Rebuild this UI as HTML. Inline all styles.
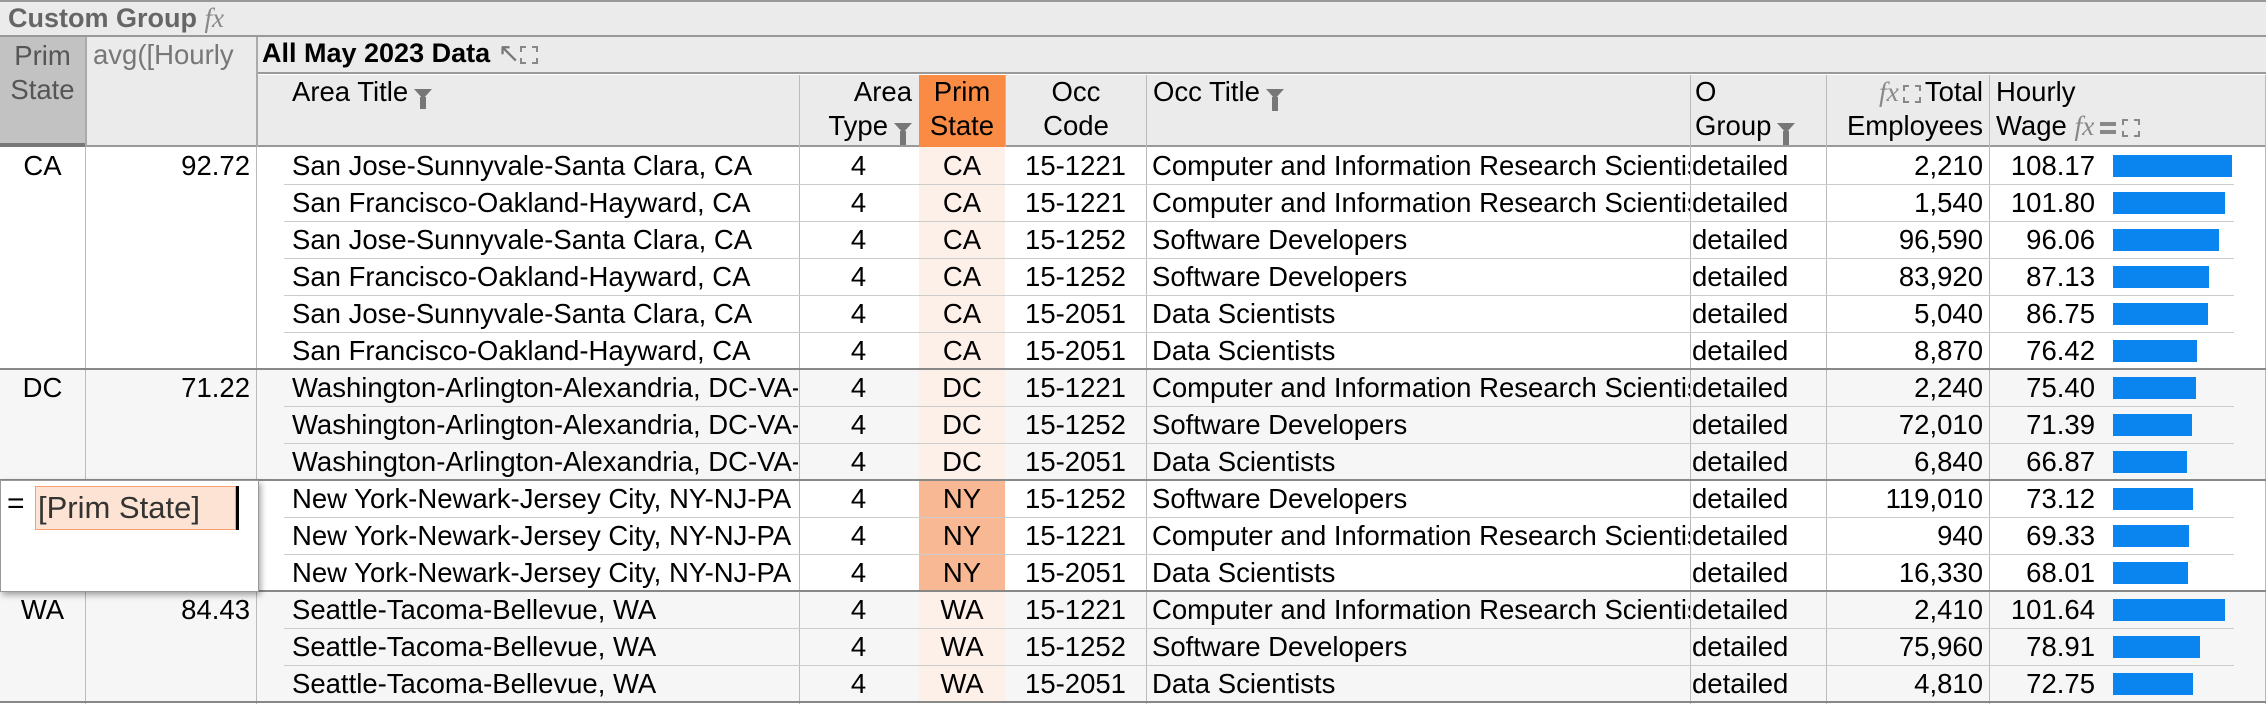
<!DOCTYPE html>
<html><head><meta charset="utf-8"><style>
*{margin:0;padding:0;box-sizing:border-box}
body{width:2266px;height:704px;overflow:hidden;background:#fff;font-family:"Liberation Sans",sans-serif;font-size:27.5px;color:#000;position:relative}
.a{position:absolute;white-space:nowrap;overflow:hidden}
.hdr{background:#ebebeb}
.c{text-align:center}.r{text-align:right}
.fun{display:inline-block;width:0;height:0;border-left:9px solid transparent;border-right:9px solid transparent;border-top:10px solid #777;position:relative;vertical-align:middle;margin-left:6px}
.fun:after{content:"";position:absolute;left:-3px;top:-2px;width:6px;height:14px;background:#777}
.dash{display:inline-block;width:18px;height:18px;border:2px dashed #888;vertical-align:middle}
.fx{font-family:"Liberation Serif",serif;font-style:italic;color:#888}
.bar{position:absolute;height:22px;background:#0a85f0}
.row{position:absolute;left:0;width:2266px;height:37px;line-height:37px}
.row div{position:absolute;top:0;height:37px;white-space:nowrap;overflow:hidden}
.ln{position:absolute;left:284px;width:1950px;height:1px;background:#ccc}
.g{position:absolute;left:0;width:2266px;height:2px;background:#888}
.v{position:absolute;top:147px;height:557px;width:1px;background:#bbb}
</style></head><body>
<div class="a hdr" style="left:0;top:0;width:2266px;height:37px;border-bottom:2px solid #999;border-top:2px solid #999;padding:1px 0 0 8px;color:#666;font-weight:bold;font-size:27px">Custom Group <span class="fx" style="font-weight:normal">fx</span></div>
<div class="a hdr" style="left:0;top:37px;width:2266px;height:37px;border-bottom:2px solid #999"></div>
<div class="a" style="left:0;top:37px;width:85px;height:110px;background:#c2c2c2;border-bottom:4px solid #777;color:#555;text-align:center;padding-top:2px;white-space:normal;line-height:34px">Prim<br>State</div>
<div class="a hdr" style="left:85px;top:37px;width:171px;height:110px;border-left:2px solid #aaa;border-bottom:2px solid #999;color:#777;padding:2px 0 0 6px">avg([Hourly</div>
<div class="a" style="left:262px;top:38px;font-weight:bold;font-size:27px">All May 2023 Data <span style="color:#777;font-weight:normal">&#8598;</span><span class="dash"></span></div>
<div class="a" style="left:256px;top:37px;width:2px;height:110px;background:#aaa"></div>
<div class="a hdr" style="left:258px;top:75px;width:2008px;height:72px;border-bottom:2px solid #999"></div>
<div class="a" style="left:292px;top:75px;line-height:34px">Area Title<span class="fun"></span></div>
<div class="a r" style="left:799px;top:75px;width:119px;line-height:34px;padding-right:6px;border-left:1px solid #bbb;height:72px">Area<br>Type<span class="fun"></span></div>
<div class="a c" style="left:919px;top:75px;width:86px;height:72px;background:#f98b45;line-height:34px">Prim<br>State</div>
<div class="a c" style="left:1005px;top:75px;width:141px;line-height:34px;height:72px;border-left:1px solid #bbb">Occ<br>Code</div>
<div class="a" style="left:1146px;top:75px;width:544px;height:72px;line-height:34px;padding-left:6px;border-left:1px solid #bbb">Occ Title<span class="fun"></span></div>
<div class="a" style="left:1690px;top:75px;width:136px;height:72px;line-height:34px;padding-left:4px;border-left:1px solid #bbb">O<br>Group<span class="fun"></span></div>
<div class="a r" style="left:1826px;top:75px;width:163px;height:72px;line-height:34px;padding-right:6px;border-left:1px solid #bbb"><span class="fx">fx</span><span class="dash" style="margin:0 4px"></span>Total<br>Employees</div>
<div class="a" style="left:1989px;top:75px;width:277px;height:72px;line-height:34px;padding-left:6px;border-left:1px solid #bbb;border-right:1px solid #bbb">Hourly<br>Wage <span class="fx">fx</span><span style="display:inline-block;width:16px;height:12px;border-top:4px solid #888;border-bottom:4px solid #888;vertical-align:middle;margin:0 6px"></span><span class="dash"></span></div>

<div class="a" style="left:0;top:369px;width:2266px;height:111px;background:#f6f6f6"></div>
<div class="a" style="left:0;top:591px;width:2266px;height:111px;background:#f6f6f6"></div>

<div class="v" style="left:85px"></div><div class="v" style="left:256px"></div><div class="v" style="left:799px"></div><div class="v" style="left:1146px"></div><div class="v" style="left:1690px"></div><div class="v" style="left:1826px"></div><div class="v" style="left:1989px"></div><div class="v" style="left:2265px"></div>
<div class="a" style="left:919px;top:147px;width:86px;height:555px;background:#fdf0e9"></div>
<div class="a" style="left:919px;top:480px;width:86px;height:111px;background:#f9b894"></div>

<div class="row" style="top:147px"><div style="left:0;width:85px;text-align:center">CA</div><div style="left:85px;width:165px;text-align:right">92.72</div><div style="left:292px;width:506px">San Jose-Sunnyvale-Santa Clara, CA</div><div style="left:799px;width:119px;text-align:center">4</div><div style="left:919px;width:86px;text-align:center">CA</div><div style="left:1005px;width:141px;text-align:center">15-1221</div><div style="left:1152px;width:538px">Computer and Information Research Scientists</div><div style="left:1692px">detailed</div><div style="left:1826px;width:157px;text-align:right">2,210</div><div style="left:1995px;width:100px;text-align:right">108.17</div></div>
<div class="row" style="top:184px"><div style="left:292px;width:506px">San Francisco-Oakland-Hayward, CA</div><div style="left:799px;width:119px;text-align:center">4</div><div style="left:919px;width:86px;text-align:center">CA</div><div style="left:1005px;width:141px;text-align:center">15-1221</div><div style="left:1152px;width:538px">Computer and Information Research Scientists</div><div style="left:1692px">detailed</div><div style="left:1826px;width:157px;text-align:right">1,540</div><div style="left:1995px;width:100px;text-align:right">101.80</div></div>
<div class="row" style="top:221px"><div style="left:292px;width:506px">San Jose-Sunnyvale-Santa Clara, CA</div><div style="left:799px;width:119px;text-align:center">4</div><div style="left:919px;width:86px;text-align:center">CA</div><div style="left:1005px;width:141px;text-align:center">15-1252</div><div style="left:1152px;width:538px">Software Developers</div><div style="left:1692px">detailed</div><div style="left:1826px;width:157px;text-align:right">96,590</div><div style="left:1995px;width:100px;text-align:right">96.06</div></div>
<div class="row" style="top:258px"><div style="left:292px;width:506px">San Francisco-Oakland-Hayward, CA</div><div style="left:799px;width:119px;text-align:center">4</div><div style="left:919px;width:86px;text-align:center">CA</div><div style="left:1005px;width:141px;text-align:center">15-1252</div><div style="left:1152px;width:538px">Software Developers</div><div style="left:1692px">detailed</div><div style="left:1826px;width:157px;text-align:right">83,920</div><div style="left:1995px;width:100px;text-align:right">87.13</div></div>
<div class="row" style="top:295px"><div style="left:292px;width:506px">San Jose-Sunnyvale-Santa Clara, CA</div><div style="left:799px;width:119px;text-align:center">4</div><div style="left:919px;width:86px;text-align:center">CA</div><div style="left:1005px;width:141px;text-align:center">15-2051</div><div style="left:1152px;width:538px">Data Scientists</div><div style="left:1692px">detailed</div><div style="left:1826px;width:157px;text-align:right">5,040</div><div style="left:1995px;width:100px;text-align:right">86.75</div></div>
<div class="row" style="top:332px"><div style="left:292px;width:506px">San Francisco-Oakland-Hayward, CA</div><div style="left:799px;width:119px;text-align:center">4</div><div style="left:919px;width:86px;text-align:center">CA</div><div style="left:1005px;width:141px;text-align:center">15-2051</div><div style="left:1152px;width:538px">Data Scientists</div><div style="left:1692px">detailed</div><div style="left:1826px;width:157px;text-align:right">8,870</div><div style="left:1995px;width:100px;text-align:right">76.42</div></div>
<div class="row" style="top:369px"><div style="left:0;width:85px;text-align:center">DC</div><div style="left:85px;width:165px;text-align:right">71.22</div><div style="left:292px;width:506px">Washington-Arlington-Alexandria, DC-VA-MD-WV</div><div style="left:799px;width:119px;text-align:center">4</div><div style="left:919px;width:86px;text-align:center">DC</div><div style="left:1005px;width:141px;text-align:center">15-1221</div><div style="left:1152px;width:538px">Computer and Information Research Scientists</div><div style="left:1692px">detailed</div><div style="left:1826px;width:157px;text-align:right">2,240</div><div style="left:1995px;width:100px;text-align:right">75.40</div></div>
<div class="row" style="top:406px"><div style="left:292px;width:506px">Washington-Arlington-Alexandria, DC-VA-MD-WV</div><div style="left:799px;width:119px;text-align:center">4</div><div style="left:919px;width:86px;text-align:center">DC</div><div style="left:1005px;width:141px;text-align:center">15-1252</div><div style="left:1152px;width:538px">Software Developers</div><div style="left:1692px">detailed</div><div style="left:1826px;width:157px;text-align:right">72,010</div><div style="left:1995px;width:100px;text-align:right">71.39</div></div>
<div class="row" style="top:443px"><div style="left:292px;width:506px">Washington-Arlington-Alexandria, DC-VA-MD-WV</div><div style="left:799px;width:119px;text-align:center">4</div><div style="left:919px;width:86px;text-align:center">DC</div><div style="left:1005px;width:141px;text-align:center">15-2051</div><div style="left:1152px;width:538px">Data Scientists</div><div style="left:1692px">detailed</div><div style="left:1826px;width:157px;text-align:right">6,840</div><div style="left:1995px;width:100px;text-align:right">66.87</div></div>
<div class="row" style="top:480px"><div style="left:292px;width:506px">New York-Newark-Jersey City, NY-NJ-PA</div><div style="left:799px;width:119px;text-align:center">4</div><div style="left:919px;width:86px;text-align:center">NY</div><div style="left:1005px;width:141px;text-align:center">15-1252</div><div style="left:1152px;width:538px">Software Developers</div><div style="left:1692px">detailed</div><div style="left:1826px;width:157px;text-align:right">119,010</div><div style="left:1995px;width:100px;text-align:right">73.12</div></div>
<div class="row" style="top:517px"><div style="left:292px;width:506px">New York-Newark-Jersey City, NY-NJ-PA</div><div style="left:799px;width:119px;text-align:center">4</div><div style="left:919px;width:86px;text-align:center">NY</div><div style="left:1005px;width:141px;text-align:center">15-1221</div><div style="left:1152px;width:538px">Computer and Information Research Scientists</div><div style="left:1692px">detailed</div><div style="left:1826px;width:157px;text-align:right">940</div><div style="left:1995px;width:100px;text-align:right">69.33</div></div>
<div class="row" style="top:554px"><div style="left:292px;width:506px">New York-Newark-Jersey City, NY-NJ-PA</div><div style="left:799px;width:119px;text-align:center">4</div><div style="left:919px;width:86px;text-align:center">NY</div><div style="left:1005px;width:141px;text-align:center">15-2051</div><div style="left:1152px;width:538px">Data Scientists</div><div style="left:1692px">detailed</div><div style="left:1826px;width:157px;text-align:right">16,330</div><div style="left:1995px;width:100px;text-align:right">68.01</div></div>
<div class="row" style="top:591px"><div style="left:0;width:85px;text-align:center">WA</div><div style="left:85px;width:165px;text-align:right">84.43</div><div style="left:292px;width:506px">Seattle-Tacoma-Bellevue, WA</div><div style="left:799px;width:119px;text-align:center">4</div><div style="left:919px;width:86px;text-align:center">WA</div><div style="left:1005px;width:141px;text-align:center">15-1221</div><div style="left:1152px;width:538px">Computer and Information Research Scientists</div><div style="left:1692px">detailed</div><div style="left:1826px;width:157px;text-align:right">2,410</div><div style="left:1995px;width:100px;text-align:right">101.64</div></div>
<div class="row" style="top:628px"><div style="left:292px;width:506px">Seattle-Tacoma-Bellevue, WA</div><div style="left:799px;width:119px;text-align:center">4</div><div style="left:919px;width:86px;text-align:center">WA</div><div style="left:1005px;width:141px;text-align:center">15-1252</div><div style="left:1152px;width:538px">Software Developers</div><div style="left:1692px">detailed</div><div style="left:1826px;width:157px;text-align:right">75,960</div><div style="left:1995px;width:100px;text-align:right">78.91</div></div>
<div class="row" style="top:665px"><div style="left:292px;width:506px">Seattle-Tacoma-Bellevue, WA</div><div style="left:799px;width:119px;text-align:center">4</div><div style="left:919px;width:86px;text-align:center">WA</div><div style="left:1005px;width:141px;text-align:center">15-2051</div><div style="left:1152px;width:538px">Data Scientists</div><div style="left:1692px">detailed</div><div style="left:1826px;width:157px;text-align:right">4,810</div><div style="left:1995px;width:100px;text-align:right">72.75</div></div>

<div class="ln" style="top:184px"></div><div class="ln" style="top:221px"></div><div class="ln" style="top:258px"></div><div class="ln" style="top:295px"></div><div class="ln" style="top:332px"></div>
<div class="ln" style="top:406px"></div><div class="ln" style="top:443px"></div>
<div class="ln" style="top:517px"></div><div class="ln" style="top:554px"></div>
<div class="ln" style="top:628px"></div><div class="ln" style="top:665px"></div>
<div class="g" style="top:368px"></div><div class="g" style="top:479px"></div><div class="g" style="top:590px"></div><div class="g" style="top:701px"></div>

<div class="bar" style="left:2113px;top:155px;width:119px"></div>
<div class="bar" style="left:2113px;top:192px;width:112px"></div>
<div class="bar" style="left:2113px;top:229px;width:106px"></div>
<div class="bar" style="left:2113px;top:266px;width:96px"></div>
<div class="bar" style="left:2113px;top:303px;width:95px"></div>
<div class="bar" style="left:2113px;top:340px;width:84px"></div>
<div class="bar" style="left:2113px;top:377px;width:83px"></div>
<div class="bar" style="left:2113px;top:414px;width:79px"></div>
<div class="bar" style="left:2113px;top:451px;width:74px"></div>
<div class="bar" style="left:2113px;top:488px;width:80px"></div>
<div class="bar" style="left:2113px;top:525px;width:76px"></div>
<div class="bar" style="left:2113px;top:562px;width:75px"></div>
<div class="bar" style="left:2113px;top:599px;width:112px"></div>
<div class="bar" style="left:2113px;top:636px;width:87px"></div>
<div class="bar" style="left:2113px;top:673px;width:80px"></div>

<div class="a" style="left:0;top:480px;width:259px;height:112px;background:#fff;border:1px solid #999;box-shadow:2px 3px 6px rgba(0,0,0,.35)">
<div style="position:absolute;left:6px;top:6px;font-size:30px">=</div>
<div style="position:absolute;left:34px;top:5px;width:201px;height:44px;background:#fde3d3;border:1px solid #f6a070;font-size:31px;line-height:42px;padding-left:2px;color:#333">[Prim State]</div>
<div style="position:absolute;left:235px;top:5px;width:3px;height:44px;background:#000"></div>
</div>
</body></html>
